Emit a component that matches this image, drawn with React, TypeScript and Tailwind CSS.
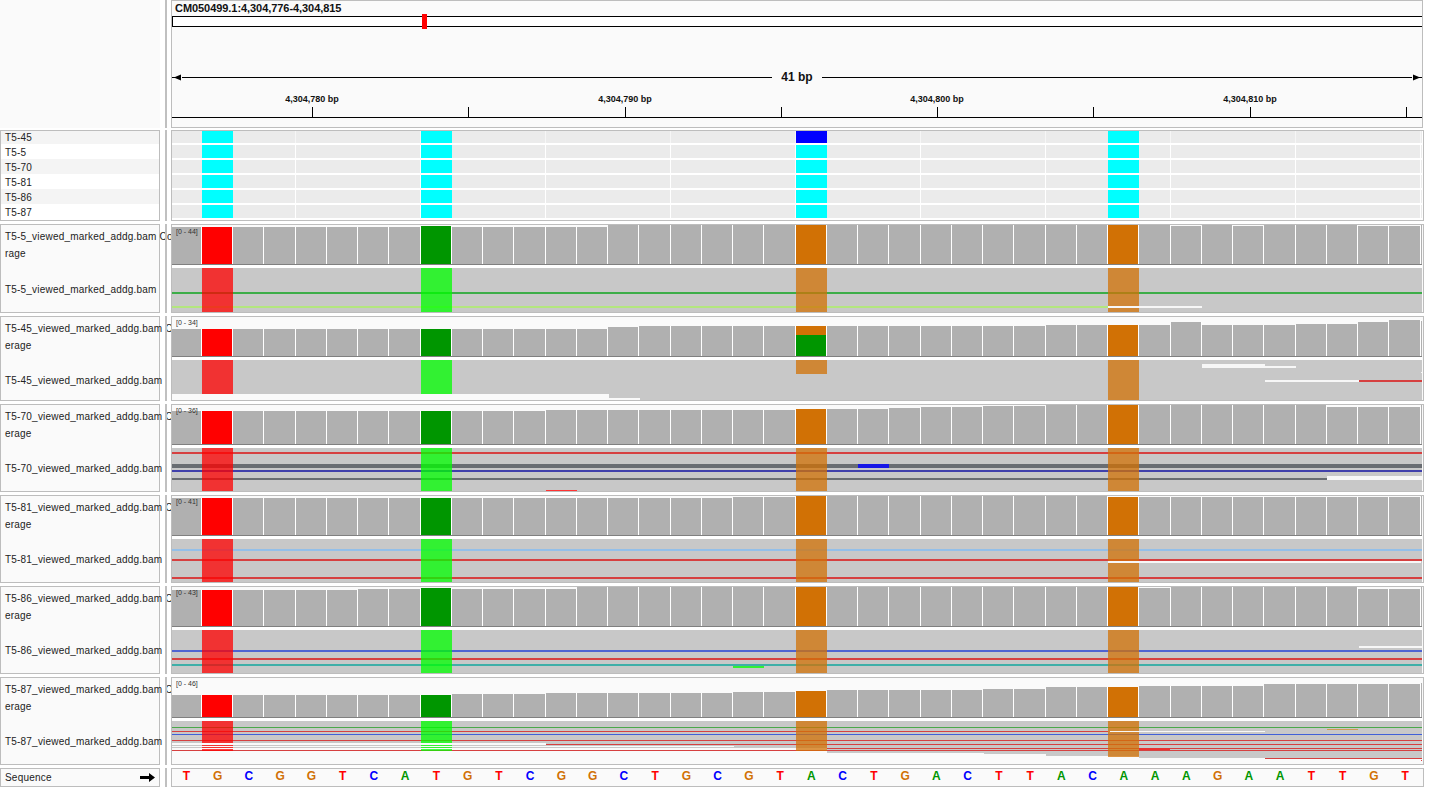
import React from 'react';

const SEQ = 'TGCGGTCATGTCGGCTGCGTACTGACTTACAAAGAATTGT'.split('');
const SEQ_COLOR: Record<string, string> = {
  T: 'text-[#ff0000]',
  G: 'text-[#d17105]',
  C: 'text-[#0000ff]',
  A: 'text-[#009600]',
};

// pixel edge of each base column, first one is cut by the panel
const edge = (i: number) => Math.max(172, Math.ceil(170.75 + 31.25 * i - 0.5));
const BASES = Array.from({ length: 41 }, (_, i) => i);
const baseWidth = (i: number) => (i === 40 ? 1 : edge(i + 1) - edge(i));

const runs = (list: number[][]) => list.flatMap(([v, n]) => Array(n).fill(v) as number[]);

const BAR_COLOR: Record<number, string> = {
  1: 'bg-[#ff0000]',
  8: 'bg-[#009600]',
  20: 'bg-[#d17105]',
  30: 'bg-[#d17105]',
};

type R = [number, number, number, number, string];

const RED = '#d64040';
const COL = { red: '#ff0000', green: '#00ff00', orange: '#d17105' };
const X1 = 202;
const X8 = 421;
const X20 = 796;
const X30 = 1108;
const END = 1422;
const fullCols = (a: number, b: number): R[] => [
  [X1, 233, a, b, COL.red],
  [X8, 452, a, b, COL.green],
  [X20, 827, a, b, COL.orange],
  [X30, 1139, a, b, COL.orange],
];

type Track = {
  name: string;
  range: string;
  first: string;
  second: string;
  gap: string;
  rowClass: string;
  readsClass: string;
  labelTop: string;
  heights: number[];
  y0: number;
  h: number;
  under: R[];
  lines: R[];
  cols: R[];
  top: R[];
};

const TRACKS: Track[] = [
  {
    name: 'T5-5_viewed_marked_addg.bam',
    range: '[0 - 44]',
    first: 'T5-5_viewed_marked_addg.bam Cove',
    second: 'rage',
    gap: 'mt-[20px]',
    rowClass: 'h-[89px]',
    readsClass: 'h-[44px]',
    labelTop: 'top-[3px]',
    heights: runs([[37, 8], [38, 1], [37, 5], [39, 18], [38, 1], [39, 1], [38, 1], [39, 3], [38, 2], [39, 1]]),
    y0: 268,
    h: 44,
    under: [[172, END, 268, 312, '#c8c8c8']],
    lines: [
      [172, END, 292, 294, '#3cad48'],
      [172, X30, 306, 308, '#b3e67e'],
    ],
    cols: fullCols(268, 312),
    top: [[X30, 1202, 306, 308, '#f7f7f7']],
  },
  {
    name: 'T5-45_viewed_marked_addg.bam',
    range: '[0 - 34]',
    first: 'T5-45_viewed_marked_addg.bam Cov',
    second: 'erage',
    gap: 'mt-[19px]',
    rowClass: 'h-[85px]',
    readsClass: 'h-[40px]',
    labelTop: 'top-[2px]',
    heights: runs([[27, 14], [29, 1], [30, 13], [31, 4], [34, 1], [31, 3], [32, 2], [34, 1], [36, 1], [35, 1]]),
    y0: 360,
    h: 40,
    under: [
      [172, 609, 360, 394, '#c8c8c8'],
      [609, 640, 360, 398, '#c8c8c8'],
      [640, END, 360, 400, '#c8c8c8'],
    ],
    lines: [[1359, END, 380, 382, RED]],
    cols: [
      [X1, 233, 360, 394, COL.red],
      [X8, 452, 360, 394, COL.green],
      [X20, 827, 360, 374, COL.orange],
      [X30, 1139, 360, 400, COL.orange],
    ],
    top: [
      [1202, 1265, 364, 368, '#f7f7f7'],
      [1265, 1296, 366, 368, '#f7f7f7'],
      [1265, 1359, 380, 382, '#f7f7f7'],
      [1421, END, 372, 373, '#f7f7f7'],
    ],
  },
  {
    name: 'T5-70_viewed_marked_addg.bam',
    range: '[0 - 36]',
    first: 'T5-70_viewed_marked_addg.bam Cov',
    second: 'erage',
    gap: 'mt-[19px]',
    rowClass: 'h-[88px]',
    readsClass: 'h-[43px]',
    labelTop: 'top-[2px]',
    heights: runs([[33, 12], [34, 8], [35, 3], [36, 1], [37, 2], [38, 2], [39, 9], [37, 3], [39, 1]]),
    y0: 448,
    h: 43,
    under: [[172, END, 448, 491, '#c8c8c8']],
    lines: [
      [172, END, 452, 454, RED],
      [172, END, 464, 468, '#696d72'],
      [172, END, 470, 472, '#4040ab'],
      [172, 1327, 478, 480, '#696d72'],
    ],
    cols: fullCols(448, 491),
    top: [
      [858, 889, 464, 468, '#1616e6'],
      [1327, END, 476, 480, '#f7f7f7'],
      [546, 577, 490, 491, '#ff3333'],
    ],
  },
  {
    name: 'T5-81_viewed_marked_addg.bam',
    range: '[0 - 41]',
    first: 'T5-81_viewed_marked_addg.bam Cov',
    second: 'erage',
    gap: 'mt-[19px]',
    rowClass: 'h-[88px]',
    readsClass: 'h-[43px]',
    labelTop: 'top-[2px]',
    heights: runs([[37, 18], [38, 2], [39, 10], [38, 10], [39, 1]]),
    y0: 539,
    h: 43,
    under: [[172, END, 539, 582, '#c8c8c8']],
    lines: [
      [172, END, 549, 551, '#93bfe9'],
      [172, END, 559, 561, RED],
      [172, END, 577, 579, RED],
    ],
    cols: fullCols(539, 582),
    top: [[X30, 1421, 561, 563, '#f7f7f7']],
  },
  {
    name: 'T5-86_viewed_marked_addg.bam',
    range: '[0 - 43]',
    first: 'T5-86_viewed_marked_addg.bam Cov',
    second: 'erage',
    gap: 'mt-[19px]',
    rowClass: 'h-[88px]',
    readsClass: 'h-[43px]',
    labelTop: 'top-[2px]',
    heights: runs([[36, 6], [37, 2], [38, 1], [37, 4], [39, 18], [38, 1], [39, 6], [37, 2], [39, 1]]),
    y0: 630,
    h: 43,
    under: [[172, END, 630, 673, '#c8c8c8']],
    lines: [
      [172, END, 650, 652, '#4f63d1'],
      [172, END, 658, 660, RED],
      [172, END, 664, 666, '#3fafa8'],
    ],
    cols: fullCols(630, 673),
    top: [
      [1359, END, 646, 648, '#f7f7f7'],
      [733, 764, 666, 668, '#33f033'],
    ],
  },
  {
    name: 'T5-87_viewed_marked_addg.bam',
    range: '[0 - 46]',
    first: 'T5-87_viewed_marked_addg.bam Cov',
    second: 'erage',
    gap: 'mt-[19px]',
    rowClass: 'h-[88px]',
    readsClass: 'h-[43px]',
    labelTop: 'top-[2px]',
    heights: runs([[22, 9], [23, 3], [24, 6], [25, 2], [26, 1], [27, 5], [28, 2], [30, 3], [31, 4], [33, 5], [34, 1]]),
    y0: 721,
    h: 43,
    under: [
      [172, 546, 721, 743, '#c8c8c8'],
      [172, 546, 745, 746, '#c8c8c8'],
      [172, 734, 747, 748, '#c8c8c8'],
      [546, 734, 721, 746, '#c8c8c8'],
      [734, 827, 721, 748, '#c8c8c8'],
      [827, 984, 721, 753, '#c8c8c8'],
      [984, 1046, 721, 754, '#c8c8c8'],
      [1046, 1139, 721, 756, '#c8c8c8'],
      [1139, END, 721, 758, '#c8c8c8'],
    ],
    lines: [
      [172, END, 727, 728, '#4aa84a'],
      [172, X30, 731, 732, RED],
      [172, END, 734, 735, '#4060d8'],
      [172, END, 740, 741, RED],
      [546, END, 744, 745, RED],
      [827, END, 748, 749, RED],
      [172, END, 750, 751, RED],
    ],
    cols: [
      [X1, 233, 721, 743, COL.red],
      [X1, 233, 745, 746, COL.red],
      [X1, 233, 747, 748, COL.red],
      [X1, 233, 749, 751, COL.red],
      [X8, 452, 721, 743, COL.green],
      [X8, 452, 745, 746, COL.green],
      [X8, 452, 747, 748, COL.green],
      [X8, 452, 749, 751, COL.green],
      [X20, 827, 721, 751, COL.orange],
      [X30, 1139, 721, 757, COL.orange],
    ],
    top: [
      [1110, 1265, 731, 732, '#f7f7f7'],
      [1139, 1170, 748, 750, '#e83030'],
      [1327, 1358, 729, 730, '#d19a55'],
      [1265, END, 758, 759, RED],
      [1421, END, 760, 761, RED],
    ],
  },
];

const ATTRS = ['T5-45', 'T5-5', 'T5-70', 'T5-81', 'T5-86', 'T5-87'];
const ATTR_ROWS = ['h-[12px]', 'h-[13px]', 'h-[13px]', 'h-[13px]', 'h-[13px]', 'h-[13px]'];
const NAME_ROWS = [
  'h-[13px] bg-[#f4f4f4]',
  'h-[15px] pt-[1px] bg-white',
  'h-[15px] pt-[1px] bg-[#f4f4f4]',
  'h-[15px] pt-[1px] bg-white',
  'h-[15px] pt-[1px] bg-[#f4f4f4]',
  'h-[15px] pt-[1px] bg-white',
];
const TICKS = [312, 468, 625, 781, 937, 1093, 1250, 1406];
const LABELS = [
  { x: 312, text: '4,304,780 bp' },
  { x: 625, text: '4,304,790 bp' },
  { x: 937, text: '4,304,800 bp' },
  { x: 1250, text: '4,304,810 bp' },
];

const Sep = () => <div className="ml-[5px] mr-[4px] w-[2px] shrink-0 bg-[#c0c0c0]"></div>;

const Reads = ({ t }: { t: Track }) => {
  const draw = (list: R[], opacity?: number) =>
    list.map(([a, b, c, d, fill], i) => (
      <rect key={i} x={a} y={c} width={b - a} height={d - c} fill={fill} fillOpacity={opacity} />
    ));
  return (
    <svg
      className={`block w-[1250px] ${t.readsClass}`}
      viewBox={`172 ${t.y0} 1250 ${t.h}`}
      shapeRendering="crispEdges"
    >
      {draw(t.under)}
      {draw(t.lines)}
      {draw(t.cols, 0.75)}
      {draw(t.top)}
    </svg>
  );
};

const Bar = ({ i, height }: { i: number; height: number }) => {
  const mixed = i === 20 && height === 30;
  return (
    <div
      className={`box-border shrink-0 border-white ${i === 40 ? '' : 'border-r'} ${BAR_COLOR[i] ?? 'bg-[#b0b0b0]'}`}
      style={{ width: baseWidth(i), height }}
    >
      {mixed && <div className="mt-[9px] h-[21px] bg-[#009600]"></div>}
    </div>
  );
};

const TrackRow = ({ t }: { t: Track }) => (
  <div className={`flex ${t.rowClass}`}>
    <div className="w-[160px] shrink-0 border border-[#bdbdbd] bg-[#fafafa] pt-[4px] text-[10px] leading-[16px] tracking-[0.2px] text-[#222]">
      <div className="w-[170px] overflow-hidden whitespace-nowrap pl-[4px]">{t.first}</div>
      <div className="mt-[1px] pl-[4px]">{t.second}</div>
      <div className={`w-[170px] overflow-hidden whitespace-nowrap pl-[4px] ${t.gap}`}>{t.name}</div>
    </div>
    <Sep />
    <div className="w-[1253px] shrink-0 border border-[#bdbdbd] bg-[#fafafa]">
      <div className="relative flex h-[39px] w-[1250px] items-end">
        {BASES.map((i) => (
          <Bar key={i} i={i} height={t.heights[i]} />
        ))}
        <span className={`absolute left-[4px] text-[7px] leading-[8px] text-[#333] ${t.labelTop}`}>{t.range}</span>
      </div>
      <div className="h-[1px] w-[1250px] bg-[#808080]"></div>
      <div className="h-[3px] w-[1250px] bg-white"></div>
      <Reads t={t} />
    </div>
  </div>
);

const App = () => {
  return (
    <div className="flex h-[787px] w-[1440px] flex-col gap-[3px] overflow-hidden bg-white font-['Liberation_Sans',Arial,sans-serif]">
      {/* header with ideogram and ruler */}
      <div className="flex h-[128px]">
        <div className="w-[160px] shrink-0 bg-[#fafafa]"></div>
        <Sep />
        <div className="w-[1252px] shrink-0 border border-[#bdbdbd] bg-[#fafafa]">
          <div className="h-[15px] pl-[3px] text-[11px] font-bold leading-[14px] tracking-[-0.06px] text-[#111]">
            CM050499.1:4,304,776-4,304,815
          </div>
          <div className="relative h-[11px] w-[1250px] border-y border-l border-black bg-white">
            <div className="absolute left-[249px] top-[-3px] h-[15px] w-[5px] bg-[#ff0000]"></div>
          </div>
          <div className="mt-[42px] flex h-[16px] w-[1250px] items-center">
            <svg className="h-[7px] w-[10px]" viewBox="0 0 10 7">
              <path d="M0 3h3L9 .5v6L3 4H0z" fill="#000" />
            </svg>
            <div className="h-[1px] flex-1 bg-black"></div>
            <span className="w-[50px] text-center text-[12px] font-bold leading-[16px] text-[#111]">41 bp</span>
            <div className="h-[1px] flex-1 bg-black"></div>
            <svg className="h-[7px] w-[10px]" viewBox="0 0 10 7">
              <path d="M10 3H7L1 .5v6L7 4h3z" fill="#000" />
            </svg>
          </div>
          <div className="relative mt-[9px] h-[26px] w-[1250px]">
            {LABELS.map((l) => (
              <span
                key={l.x}
                className="absolute top-0 -translate-x-1/2 whitespace-nowrap text-[9px] font-bold leading-[11px] text-[#111]"
                style={{ left: l.x - 172 }}
              >
                {l.text}
              </span>
            ))}
            {TICKS.map((x) => (
              <div key={x} className="absolute top-[13px] h-[10px] w-[1px] bg-black" style={{ left: x - 172 }}></div>
            ))}
            <div className="absolute left-0 top-[23px] h-[1px] w-[1250px] bg-black"></div>
          </div>
        </div>
      </div>

      {/* sample attributes */}
      <div className="-mt-[1px] flex h-[91px]">
        <div className="w-[160px] shrink-0 border border-[#bdbdbd] bg-white text-[10px] tracking-[0.2px] text-[#222]">
          {ATTRS.map((a, r) => (
            <div key={a} className={`flex items-center pl-[4px] ${NAME_ROWS[r]}`}>
              {a}
            </div>
          ))}
        </div>
        <Sep />
        <div className="flex w-[1253px] shrink-0 flex-col gap-[2px] border border-[#bdbdbd] bg-white">
          {ATTRS.map((a, r) => (
            <div key={a} className={`flex w-[1250px] ${ATTR_ROWS[r]}`}>
              {BASES.map((i) => {
                const cyan = i === 1 || i === 8 || i === 20 || i === 30;
                const color = !cyan ? 'bg-[#ebebeb]' : i === 20 && r === 0 ? 'bg-[#0000ff]' : 'bg-[#00ffff]';
                const gap = (i + 1) % 4 === 0 ? (r === 0 ? 'border-r border-[#f6f6f6]' : 'border-r border-white') : '';
                return <div key={i} className={`box-border shrink-0 ${color} ${gap}`} style={{ width: baseWidth(i) }}></div>;
              })}
            </div>
          ))}
        </div>
      </div>

      {TRACKS.map((t) => (
        <TrackRow key={t.name} t={t} />
      ))}

      {/* sequence */}
      <div className="flex h-[19px]">
        <div className="flex w-[160px] shrink-0 items-center justify-between border border-[#bdbdbd] bg-[#fafafa] pl-[4px] pr-[4px] text-[10px] tracking-[0.2px] text-[#222]">
          <span>Sequence</span>
          <svg className="h-[9px] w-[15px]" viewBox="0 0 15 9">
            <path d="M0 3h9V0l6 4.5L9 9V6H0z" fill="#000" />
          </svg>
        </div>
        <Sep />
        <div className="w-[1253px] shrink-0 overflow-hidden border border-[#bdbdbd] bg-[#fafafa]">
          <div className="-ml-[1.25px] grid w-[1250px] grid-cols-[repeat(40,31.25px)] text-[12px] font-bold leading-[14px]">
            {SEQ.map((s, i) => (
              <span key={i} className={`text-center ${SEQ_COLOR[s]}`}>
                {s}
              </span>
            ))}
          </div>
        </div>
      </div>
    </div>
  );
};

export default App;
